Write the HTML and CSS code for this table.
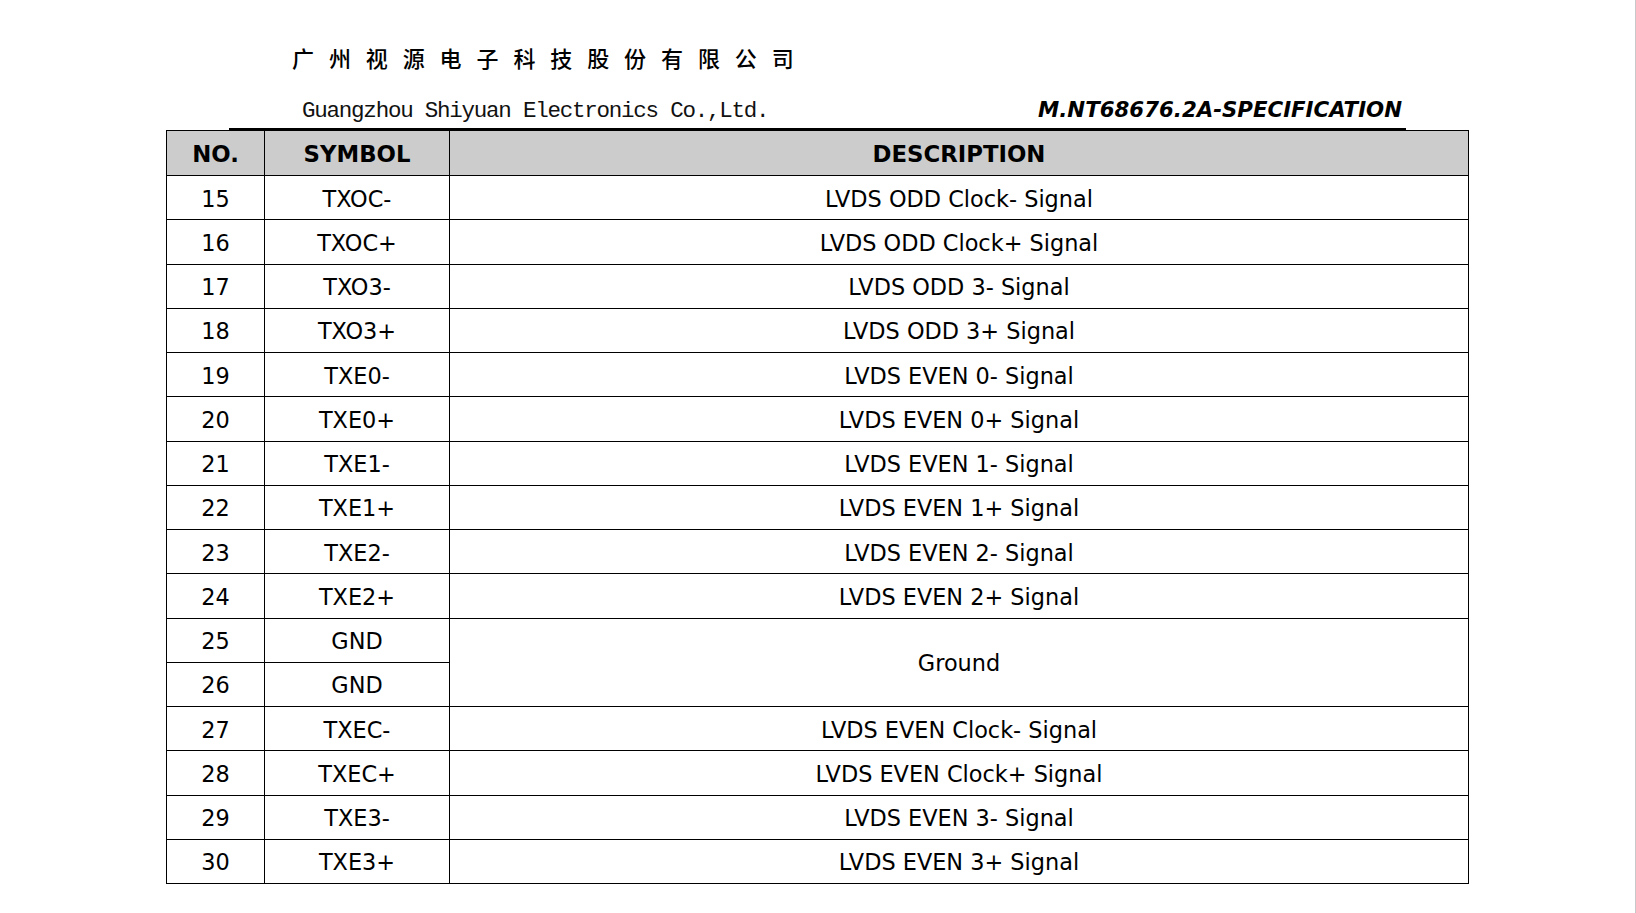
FILE: index.html
```html
<!DOCTYPE html>
<html lang="zh">
<head>
<meta charset="utf-8">
<title>M.NT68676.2A-SPECIFICATION</title>
<link rel="stylesheet" href="styles.css">
</head>
<body>
<div class="page">
  <div class="doc">
    <div class="title-cn">广州视源电子科技股份有限公司</div>
    <div class="subhead">
      <span class="title-en">Guangzhou Shiyuan Electronics Co.,Ltd.</span>
      <span class="spec">M.NT68676.2A-SPECIFICATION</span>
    </div>
    <table class="pins">
      <colgroup>
        <col class="c-no">
        <col class="c-sym">
        <col class="c-desc">
      </colgroup>
      <thead>
        <tr><th>NO.</th><th>SYMBOL</th><th>DESCRIPTION</th></tr>
      </thead>
      <tbody>
        <tr><td>15</td><td>TXOC-</td><td>LVDS ODD Clock- Signal</td></tr>
        <tr><td>16</td><td>TXOC+</td><td>LVDS ODD Clock+ Signal</td></tr>
        <tr><td>17</td><td>TXO3-</td><td>LVDS ODD 3- Signal</td></tr>
        <tr><td>18</td><td>TXO3+</td><td>LVDS ODD 3+ Signal</td></tr>
        <tr><td>19</td><td>TXE0-</td><td>LVDS EVEN 0- Signal</td></tr>
        <tr><td>20</td><td>TXE0+</td><td>LVDS EVEN 0+ Signal</td></tr>
        <tr><td>21</td><td>TXE1-</td><td>LVDS EVEN 1- Signal</td></tr>
        <tr><td>22</td><td>TXE1+</td><td>LVDS EVEN 1+ Signal</td></tr>
        <tr><td>23</td><td>TXE2-</td><td>LVDS EVEN 2- Signal</td></tr>
        <tr><td>24</td><td>TXE2+</td><td>LVDS EVEN 2+ Signal</td></tr>
        <tr><td>25</td><td>GND</td><td rowspan="2">Ground</td></tr>
        <tr><td>26</td><td>GND</td></tr>
        <tr><td>27</td><td>TXEC-</td><td>LVDS EVEN Clock- Signal</td></tr>
        <tr><td>28</td><td>TXEC+</td><td>LVDS EVEN Clock+ Signal</td></tr>
        <tr><td>29</td><td>TXE3-</td><td>LVDS EVEN 3- Signal</td></tr>
        <tr><td>30</td><td>TXE3+</td><td>LVDS EVEN 3+ Signal</td></tr>
      </tbody>
    </table>
  </div>
</div>
</body>
</html>
```
FILE: styles.css
```css
html, body {
  margin: 0;
  padding: 0;
  background: #ffffff;
}

.page {
  width: 1635px;
  height: 913px;
  border-right: 1px solid #c8c8c8;
  overflow: hidden;
}

.doc {
  margin-left: 166px;
  width: 1303px;
  color: #000;
}

.title-cn {
  margin-top: 42px;
  height: 30px;
  line-height: 30px;
  padding-left: 126px;
  font-family: "Noto Sans CJK SC", sans-serif;
  font-size: 22px;
  font-weight: 500;
  letter-spacing: 14.9px;
  color: #000;
}

.subhead {
  margin-top: 23px;
  margin-left: 63px;
  width: 1177px;
  box-sizing: border-box;
  height: 35px;
  padding-left: 73px;
  padding-right: 4px;
  border-bottom: 2px solid #000;
  display: flex;
  justify-content: space-between;
  align-items: baseline;
  line-height: 30px;
}

.title-en {
  font-family: "Liberation Mono", monospace;
  font-size: 22.5px;
  letter-spacing: -1.23px;
  color: #111;
}

.spec {
  font-family: "DejaVu Sans", Verdana, sans-serif;
  font-size: 21.3px;
  font-weight: bold;
  font-style: italic;
}

.pins {
  border-collapse: collapse;
  table-layout: fixed;
  width: 1303px;
  font-family: "DejaVu Sans", Verdana, sans-serif;
  font-size: 22.4px;
}

.c-no { width: 98px; }
.c-sym { width: 185px; }

.pins th,
.pins td {
  border: 1px solid #000;
  padding: 2px 0 0;
  text-align: center;
  vertical-align: middle;
  white-space: nowrap;
}

.pins thead tr {
  height: 45px;
}

.pins th {
  background: #cccccc;
  font-weight: bold;
  font-size: 22.8px;
}

.pins tbody tr {
  height: 44.25px;
}
```
